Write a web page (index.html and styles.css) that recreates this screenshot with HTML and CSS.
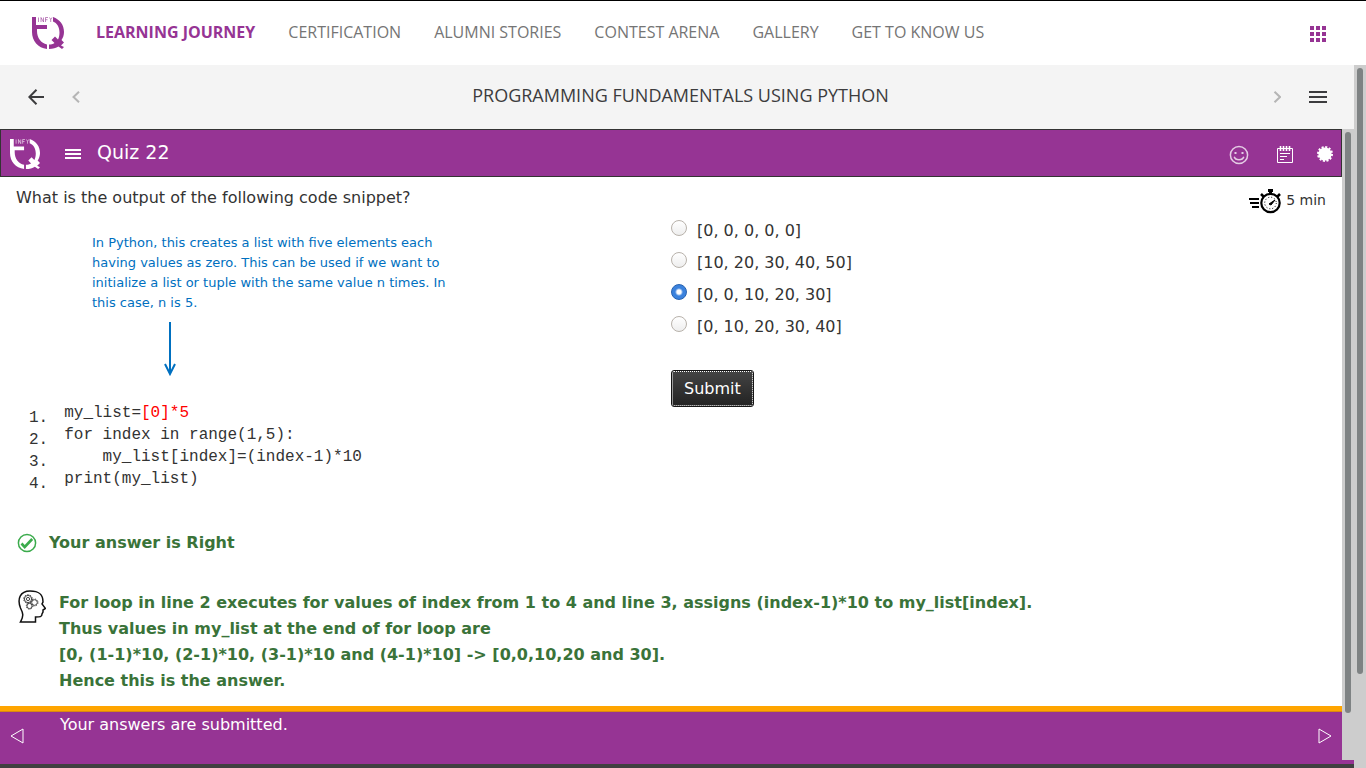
FILE: index.html
```html
<!DOCTYPE html>
<html lang="en">
<head>
<meta charset="utf-8">
<meta name="viewport" content="width=device-width, initial-scale=1">
<title>Quiz 22</title>
<link rel="stylesheet" href="styles.css">
</head>
<body>
<svg class="defs" aria-hidden="true">
  <symbol id="logo" viewBox="0 0 32 32">
    <path d="M0 0H4V8H15V12H5V14C5 21 9 26 15 27.500V32C6 31 0 24 0 15Z" fill="currentColor"/>
    <path d="M21 0C28 2.500 32 8 32 15C32 18 31 21 29.500 23L32 25.500L29 28.500L32 30L30 32L26.500 29.500C24 31 21 32 17 32V27.500C19 27.500 21 27 22.500 26L19.500 23L23 19.500L26 22.500C27 20.500 27.500 18 27.500 15.500C27.500 10 25 6 21 4.500Z" fill="currentColor"/>
    <path d="M6.500 .5V5M9 5V.5L11.500 5V.5M16 .5H13.500V5M13.500 2.700H15.500M17.500 .5L18.700 2.500L20 .5M18.700 2.500V5" fill="none" stroke="currentColor" stroke-width=".8" opacity=".75"/>
  </symbol>
</svg>
<div class="page">
  <header class="site-header">
    <svg class="logo" aria-label="Infy TQ"><use href="#logo"/></svg>
    <nav class="site-nav">
      <a class="active" href="#">LEARNING JOURNEY</a>
      <a href="#">CERTIFICATION</a>
      <a href="#">ALUMNI STORIES</a>
      <a href="#">CONTEST ARENA</a>
      <a href="#">GALLERY</a>
      <a href="#">GET TO KNOW US</a>
    </nav>
    <button class="icon-btn apps" aria-label="Apps">
      <svg width="16" height="16" viewBox="0 0 16 16" fill="currentColor"><path d="M0 0h4v4H0zM6 0h4v4H6zM12 0h4v4h-4zM0 6h4v4H0zM6 6h4v4H6zM12 6h4v4h-4zM0 12h4v4H0zM6 12h4v4H6zM12 12h4v4h-4z"/></svg>
    </button>
  </header>
  <div class="stage">
    <div class="course">
      <div class="course-bar">
        <button class="icon-btn" aria-label="Back">
          <svg width="16" height="16" viewBox="0 0 16 16" fill="none" stroke="currentColor" stroke-width="2"><path d="M16 8H1.500M8.500 .8L1.300 8l7.200 7.200"/></svg>
        </button>
        <button class="icon-btn muted" aria-label="Previous">
          <svg width="8" height="12" viewBox="0 0 8 12" fill="none" stroke="currentColor" stroke-width="2"><path d="M7 .7L1.500 6L7 11.300"/></svg>
        </button>
        <h1 class="course-title">PROGRAMMING FUNDAMENTALS USING PYTHON</h1>
        <button class="icon-btn muted" aria-label="Next">
          <svg width="8" height="12" viewBox="0 0 8 12" fill="none" stroke="currentColor" stroke-width="2"><path d="M1.500 .7L7 6L1.500 11.300"/></svg>
        </button>
        <button class="icon-btn" aria-label="Contents">
          <svg width="18" height="12" viewBox="0 0 18 12" fill="currentColor"><path d="M0 0h18v2H0zM0 5h18v2H0zM0 10h18v2H0z"/></svg>
        </button>
      </div>
      <div class="player">
        <div class="quiz">
          <div class="quiz-bar">
            <svg class="logo small" aria-hidden="true"><use href="#logo"/></svg>
            <button class="icon-btn" aria-label="Menu">
              <svg width="16" height="10" viewBox="0 0 16 10" fill="currentColor"><path d="M0 0h16v2H0zM0 4h16v2H0zM0 8h16v2H0z"/></svg>
            </button>
            <h2 class="quiz-title">Quiz 22</h2>
            <div class="quiz-tools">
              <button class="icon-btn face" aria-label="Feedback">
                <svg width="20" height="20" viewBox="0 0 20 20" fill="none" stroke="currentColor" stroke-width="1.500"><circle cx="10" cy="10" r="8.600"/><path d="M5.200 11.800c1.200 4 8.400 4 9.600 0"/><path d="M6.500 7v2M13.500 7v2" stroke-width="2"/></svg>
              </button>
              <button class="icon-btn" aria-label="Notes">
                <svg width="16" height="17" viewBox="0 0 16 17" fill="none" stroke="currentColor"><path d="M.5 2.500h15v14H.5z"/><path d="M3.500 0v5M6.500 0v5M9.500 0v5M12.500 0v5" stroke-width="1.600"/><path d="M3 7.500h10M3 10.500h7M3 13.500h4"/></svg>
              </button>
              <button class="icon-btn" aria-label="Settings">
                <svg width="16" height="16" viewBox="0 0 16 16"><circle cx="8" cy="8" r="6.600" fill="currentColor"/><circle cx="8" cy="8" r="7" fill="none" stroke="currentColor" stroke-width="2" stroke-dasharray="2.100 1.565"/></svg>
              </button>
            </div>
          </div>
          <main class="quiz-body">
            <div class="question-row">
              <p class="question">What is the output of the following code snippet?</p>
              <div class="timer">
                <svg width="32" height="25" viewBox="0 0 32 25" fill="none" stroke="#000"><path d="M0 10h10M3 14h7M1 14h2M3 18h7" stroke-width="2"/><circle cx="21.500" cy="14" r="9.200" stroke-width="2.200"/><path d="M19 1.500h5M21.500 1v4" stroke-width="3"/><path d="M12 5l3 3M28 8l3-3" stroke-width="2.600"/><circle cx="21.500" cy="14" r="5.800" stroke-dasharray="1 2.037"/><path d="M20 15l6-4-4 5z" fill="#000"/></svg>
                <span>5 min</span>
              </div>
            </div>
            <div class="columns">
              <div class="snippet">
                <p class="note">In Python, this creates a list with five elements each<br>having values as zero. This can be used if we want to<br>initialize a list or tuple with the same value n times. In<br>this case, n is 5.</p>
                <svg class="arrow" width="12" height="54" viewBox="0 0 12 54" fill="none" stroke="#0070c0" stroke-width="2"><path d="M6 0v52M1 42l5 10 5-10"/></svg>
                <div class="listing">
                  <ol class="line-numbers"><li>1.</li><li>2.</li><li>3.</li><li>4.</li></ol>
<pre class="code">my_list=<span class="hot">[0]*5</span>
for index in range(1,5):
    my_list[index]=(index-1)*10
print(my_list)</pre>
                </div>
              </div>
              <form class="answers">
                <label><input type="radio" name="answer"><span>[0, 0, 0, 0, 0]</span></label>
                <label><input type="radio" name="answer"><span>[10, 20, 30, 40, 50]</span></label>
                <label><input type="radio" name="answer" checked><span>[0, 0, 10, 20, 30]</span></label>
                <label><input type="radio" name="answer"><span>[0, 10, 20, 30, 40]</span></label>
                <button class="submit" type="button">Submit</button>
              </form>
            </div>
            <div class="verdict">
              <svg width="20" height="20" viewBox="0 0 20 20" fill="none" stroke="#3bab4c"><circle cx="10" cy="10" r="8.600" stroke-width="1.500"/><path d="M4.500 10.500l3.200 3.500 7.500-8" stroke-width="2.600"/></svg>
              <p>Your answer is Right</p>
            </div>
            <div class="explanation">
              <svg width="28" height="34" viewBox="0 0 28 34" fill="none" stroke="#111"><path d="M2.500 32C6 26 5 23 2.500 18C-1 9 2 1 12 1C21 1 25 4 25 12L24 14L27.500 18.500L25 20L25 22L24 24C24 27 22 27 17.500 27V32Z" stroke-width="1.500"/><g stroke="#444"><circle cx="10" cy="9" r="1.600"/><circle cx="10" cy="9" r="3.600"/><circle cx="10" cy="9" r="4.300" stroke-dasharray="1.500 1.202"/><circle cx="16.500" cy="12.500" r="2.800"/><circle cx="16.500" cy="12.500" r="3.500" stroke-dasharray="1.300 1.449"/><circle cx="11.500" cy="16" r="2.600"/><circle cx="11.500" cy="16" r="3.200" stroke-dasharray="1.200 1.313"/></g></svg>
              <p>For loop in line 2 executes for values of index from 1 to 4 and line 3, assigns (index-1)*10 to my_list[index].<br>Thus values in my_list at the end of for loop are<br>[0, (1-1)*10, (2-1)*10, (3-1)*10 and (4-1)*10] -&gt; [0,0,10,20 and 30].<br>Hence this is the answer.</p>
            </div>
          </main>
          <footer class="quiz-footer">
            <button class="icon-btn" aria-label="Previous page">
              <svg width="14" height="16" viewBox="0 0 14 16" fill="none" stroke="currentColor"><path d="M13 1v14L1 8z"/></svg>
            </button>
            <p class="status">Your answers are submitted.</p>
            <button class="icon-btn" aria-label="Next page">
              <svg width="14" height="16" viewBox="0 0 14 16" fill="none" stroke="currentColor"><path d="M1 1v14l12-7z"/></svg>
            </button>
          </footer>
        </div>
        <div class="scrollbar inner"><div class="thumb"></div></div>
      </div>
    </div>
    <div class="scrollbar outer"><div class="thumb"></div></div>
  </div>
</div>
</body>
</html>
```
FILE: styles.css
```css
* { box-sizing: border-box; }
body {
  margin: 0;
  font: 16px/24px "DejaVu Sans", Verdana, sans-serif;
  color: #333;
  background: #fff;
}
h1, h2, p, ol, pre { margin: 0; }
.defs { position: absolute; width: 0; height: 0; }
.page { display: flex; flex-direction: column; min-height: 100vh; }
.icon-btn {
  display: flex;
  align-items: center;
  padding: 0;
  border: 0;
  background: none;
  color: inherit;
}
.logo { width: 32px; height: 32px; flex: none; }
.logo.small { width: 30px; height: 30px; }

.site-header {
  display: flex;
  align-items: center;
  height: 65px;
  padding: 0 40px 0 32px;
  border-top: 1px solid #000;
  color: #963494;
}
.site-nav {
  display: flex;
  gap: 33px;
  flex: 1;
  padding: 0 0 2px 32px;
  font-family: "Open Sans", "Noto Sans", sans-serif;
}
.site-nav a { color: #757575; text-decoration: none; white-space: nowrap; }
.site-nav .active { color: #963494; font-weight: 700; }
.apps { padding-top: 2px; }

.stage { display: flex; flex: 1; }
.course {
  display: flex;
  flex-direction: column;
  flex: 1;
  border-bottom: 4px solid #404040;
}
.course-bar {
  display: flex;
  align-items: center;
  gap: 28px;
  height: 64px;
  padding: 0 27px 0 28px;
  background: #f4f4f4;
  color: #3c3c3e;
}
.muted { color: #b5b5b5; }
.course-title {
  flex: 1;
  padding: 0 0 4px 8px;
  text-align: center;
  font: 400 18px/24px "Open Sans", "Noto Sans", sans-serif;
}

.player { display: flex; flex: 1; background: #963494; }
.quiz { display: flex; flex-direction: column; flex: 1; }
.quiz-bar {
  display: flex;
  align-items: center;
  height: 48px;
  padding: 2px 8px 0 9px;
  border: 1px solid #333;
  color: #fff;
}
.quiz-bar > .icon-btn { margin-left: 25px; }
.quiz-title { flex: 1; padding: 0 0 4px 16px; font-size: 19px; font-weight: 400; }
.quiz-tools { display: flex; align-items: center; gap: 28px; }
.quiz-tools .icon-btn:last-child { margin-left: -4px; }
.face { padding-top: 2px; opacity: .75; }

.quiz-body { flex: 1; padding: 9px 0 12px; background: #fff; }
.question-row {
  display: flex;
  justify-content: space-between;
  height: 30px;
  margin-bottom: 2px;
  padding: 0 16px;
}
.timer { display: flex; align-items: center; gap: 5px; font-size: 14px; }
.timer span { padding-bottom: 2px; }
.columns { display: grid; grid-template-columns: 1fr 1fr; }
.note {
  margin: 15px 0 0 92px;
  font-size: 13px;
  line-height: 20px;
  color: #0070c0;
}
.arrow { display: block; margin: 9px 0 0 164px; }
.listing {
  display: flex;
  gap: 16px;
  margin: 26px 0 0 29px;
  font: 16px/22px "Liberation Mono", "Courier New", monospace;
}
.line-numbers { padding: 5px 0 0; list-style: none; }
.code { font: inherit; }
.hot { color: #f00; }

.answers { display: flex; flex-direction: column; align-items: flex-start; }
.answers label { display: flex; gap: 10px; height: 32px; line-height: 26px; }
.answers input {
  appearance: none;
  width: 16px;
  height: 16px;
  margin: 2px 0 0;
  border: 1px solid #b8b2ab;
  border-radius: 50%;
  background: linear-gradient(#fff, #eee);
}
.answers input:checked {
  border-color: #2561b0;
  background: radial-gradient(circle, #fff 2px, #3b82dd 4px);
}
.submit {
  margin-top: 24px;
  height: 37px;
  padding: 0 12px;
  border: 1px solid #151515;
  border-radius: 3px;
  outline: 1px dotted #fff;
  outline-offset: -2px;
  background: linear-gradient(#444, #222);
  color: #fff;
  font: inherit;
}
.verdict, .explanation {
  display: flex;
  align-items: flex-start;
  color: #3a7339;
  font-weight: 700;
  line-height: 26px;
}
.verdict { gap: 12px; margin-top: 35px; padding-left: 17px; }
.verdict svg { margin-top: 3px; }
.explanation { gap: 13px; margin-top: 34px; padding-left: 18px; }

.quiz-footer {
  display: flex;
  align-items: center;
  height: 58px;
  padding: 0 10px;
  border-top: 5px solid #ffa500;
  box-shadow: inset 0 1px #d98a10;
  color: #fff;
}
.status { flex: 1; align-self: flex-start; padding: 2px 0 0 36px; }
.quiz-footer .icon-btn { margin-top: -4px; }

.scrollbar {
  flex: none;
  width: 12px;
  padding: 3px;
  background: #cdcdcd;
}
.thumb { height: 93%; border-radius: 3px; background: #7e8283; }
.scrollbar.inner { margin-bottom: 4px; }
.scrollbar.outer .thumb { height: 87%; }
```
